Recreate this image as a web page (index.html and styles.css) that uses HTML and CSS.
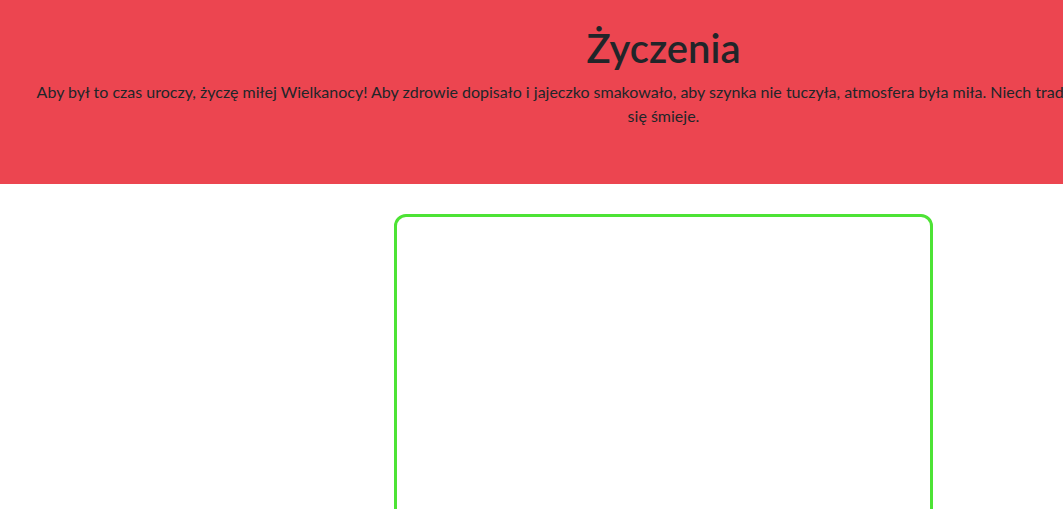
FILE: index.html
```html
<!DOCTYPE html>
<html lang="pl">
<head>
<meta charset="utf-8">
<title>Życzenia</title>
<link rel="stylesheet" href="styles.css">
</head>
<body>
<div class="page">
  <header class="hero">
    <h1 class="title">Życzenia</h1>
    <p class="wish">Aby był to czas uroczy, życzę miłej Wielkanocy! Aby zdrowie dopisało i jajeczko smakowało, aby szynka nie tuczyła, atmosfera była miła. Niech tradycja wielkanocna trwa, a serce ci się&nbsp;śmieje.</p>
  </header>
  <main class="content">
    <div class="frame"></div>
  </main>
</div>
</body>
</html>
```
FILE: styles.css
```css
html, body {
  margin: 0;
  padding: 0;
}
body {
  font-family: Lato, "Open Sans", sans-serif;
  color: #212529;
  background: #ffffff;
}
.page {
  width: 1327px;
}
.hero {
  background: #ec4550;
  height: 184px;
  box-sizing: border-box;
  padding: 24px 30px 0;
  text-align: center;
}
.title {
  margin: 0;
  font-size: 40px;
  font-weight: 600;
  line-height: 1.2;
}
.wish {
  margin: 8px 0 0;
  font-size: 16px;
  line-height: 24px;
}
.content {
  padding-top: 30px;
  display: flex;
  justify-content: center;
}
.frame {
  width: 539px;
  height: 400px;
  box-sizing: border-box;
  border: 3px solid #4de335;
  border-radius: 12px;
}
```
